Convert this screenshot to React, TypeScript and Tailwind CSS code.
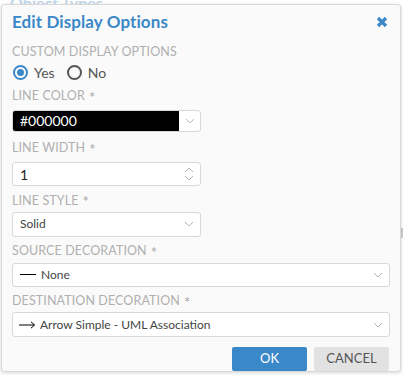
import React from "react";

const font = { fontFamily: "Lato, 'Open Sans', sans-serif" };

function Label({ children, star = true }: { children: React.ReactNode; star?: boolean }) {
  return (
    <div className="flex items-center h-[14px] text-[12.5px] leading-none text-[#b0b0b0] uppercase tracking-[0.1px]">
      <span>{children}</span>
      {star && <span className="ml-[4px] text-[15px] text-[#a8a8a8] leading-none relative top-[1px]">*</span>}
    </div>
  );
}

function Chevron({ className = "" }: { className?: string }) {
  return (
    <svg width="10" height="6" viewBox="0 0 10 6" className={className}>
      <path d="M1 1 L5 5 L9 1" fill="none" stroke="#b5b5b5" strokeWidth="1" />
    </svg>
  );
}

export default function App() {
  return (
    <div className="relative w-[403px] h-[375px] bg-white overflow-hidden" style={font}>
      <div className="absolute left-[10px] top-[-9px] text-[16px] font-bold text-[#c5d9ec]">Object Types</div>
      <div className="absolute right-0 top-[228px] w-[2px] h-[10px] bg-[#cfcfcf]" />
      <div className="absolute left-[1px] top-[4px] w-[400px] h-[368px] bg-[#fafafa] border border-[#d8d8d8] rounded-[3px] shadow-[0_1px_4px_rgba(0,0,0,0.15)] flex flex-col pl-[10px] pr-[11px]">
        <div className="flex items-center justify-between h-[32px] pt-[1px]">
          <div className="text-[17px] font-bold text-[#3b88c8] tracking-[0.1px]">Edit Display Options</div>
          <svg width="12" height="12" viewBox="0 0 12 12" className="mr-[1px] mt-[1px]">
            <path d="M2 2 L10 10 M10 2 L2 10" stroke="#3b88c8" strokeWidth="3.2" strokeLinecap="butt" />
          </svg>
        </div>
        <div className="mt-[9px]">
          <Label star={false}>Custom Display Options</Label>
        </div>
        <div className="flex items-center h-[14px] mt-[6px] text-[14px] text-[#555]">
          <div className="w-[15px] h-[15px] rounded-full border-2 border-[#3b88c8] flex items-center justify-center ml-[1px]">
            <div className="w-[7px] h-[7px] rounded-full bg-[#3b88c8]" />
          </div>
          <span className="ml-[6px]">Yes</span>
          <div className="w-[15px] h-[15px] rounded-full border-2 border-[#555] ml-[12px]" />
          <span className="ml-[6px]">No</span>
        </div>
        <div className="mt-[10px]">
          <Label>Line Color</Label>
        </div>
        <div className="mt-[6px] w-[189px] h-[23px] flex rounded-[3px] border border-[#d8d8d8] bg-white overflow-hidden">
          <div className="w-[166px] h-full bg-black text-white text-[14px] flex items-center pl-[7px]">#000000</div>
          <div className="flex-1 flex items-center justify-center">
            <Chevron />
          </div>
        </div>
        <div className="mt-[9px]">
          <Label>Line Width</Label>
        </div>
        <div className="mt-[7px] w-[189px] h-[24px] flex items-center justify-between rounded-[3px] border border-[#d8d8d8] bg-white pl-[7px] pr-[6px] text-[14px] text-[#222]">
          <span>1</span>
          <svg width="10" height="16" viewBox="0 0 10 16">
            <path d="M1 6 L5 2 L9 6 M1 10 L5 14 L9 10" fill="none" stroke="#b5b5b5" strokeWidth="1" />
          </svg>
        </div>
        <div className="mt-[8px]">
          <Label>Line Style</Label>
        </div>
        <div className="mt-[4px] w-[189px] h-[25px] flex items-center justify-between rounded-[3px] border border-[#d8d8d8] bg-white pl-[7px] pr-[6px] text-[12px] text-[#444]">
          <span>Solid</span>
          <Chevron />
        </div>
        <div className="mt-[8px]">
          <Label>Source Decoration</Label>
        </div>
        <div className="mt-[4px] w-[378px] h-[25px] flex items-center justify-between rounded-[3px] border border-[#d8d8d8] bg-white pl-[7px] pr-[6px] text-[12px] text-[#444]">
          <span className="flex items-center">
            <span className="w-[16px] h-[1px] bg-black mr-[5px]" />
            None
          </span>
          <Chevron />
        </div>
        <div className="mt-[7px]">
          <Label>Destination Decoration</Label>
        </div>
        <div className="mt-[4px] w-[378px] h-[25px] flex items-center justify-between rounded-[3px] border border-[#d8d8d8] bg-white pl-[6px] pr-[6px] text-[12px] text-[#444]">
          <span className="flex items-center">
            <svg width="17" height="8" viewBox="0 0 17 8" className="mr-[4px]">
              <path d="M0 4 H15.5 M12 0.8 L15.5 4 L12 7.2" fill="none" stroke="#000" strokeWidth="1" />
            </svg>
            Arrow Simple - UML Association
          </span>
          <Chevron />
        </div>
        <div className="mt-[10px] flex justify-end gap-[7px]">
          <button className="w-[75px] h-[24px] rounded-[2px] bg-[#3b88c8] text-white text-[13px]">OK</button>
          <button className="w-[75px] h-[24px] rounded-[2px] bg-[#e2e2e2] text-[#555] text-[13px]">CANCEL</button>
        </div>
      </div>
    </div>
  );
}
